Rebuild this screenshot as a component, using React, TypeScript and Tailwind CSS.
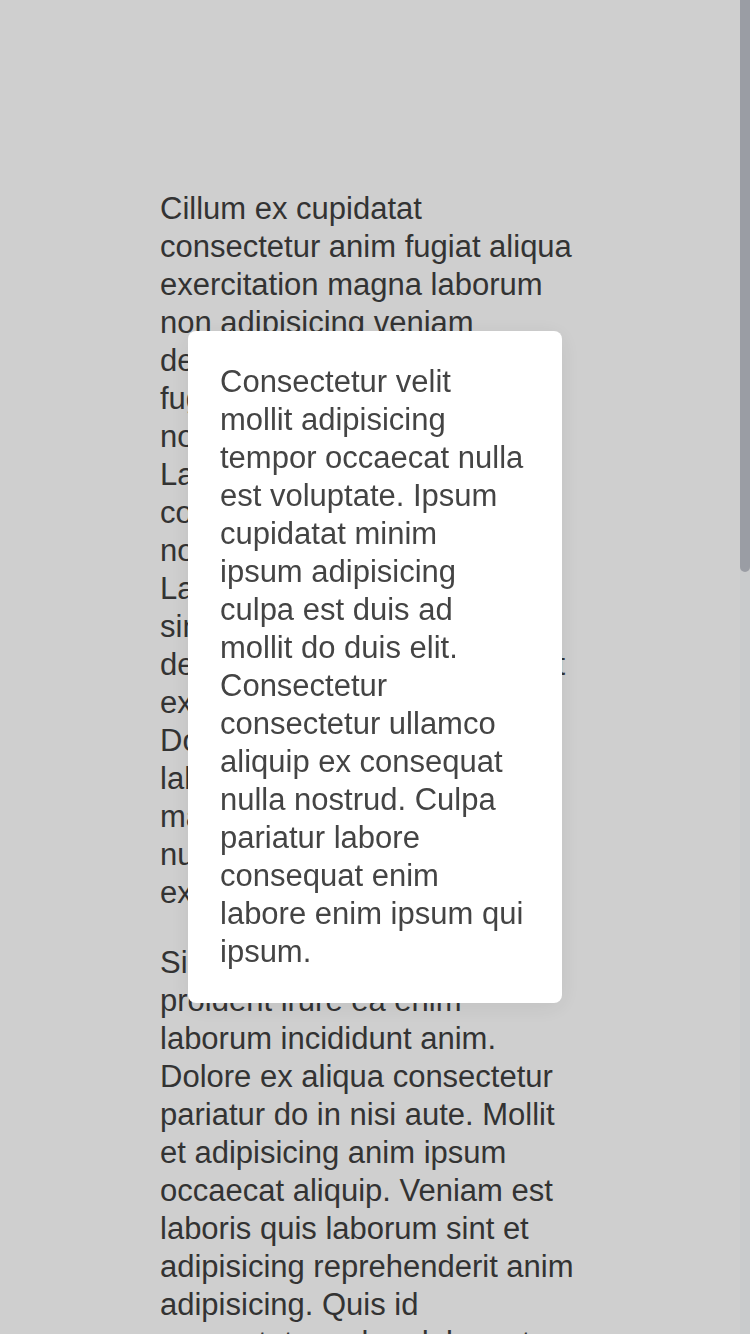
import { useState } from "react";

const PARAGRAPHS = [
  "Cillum ex cupidatat consectetur anim fugiat aliqua exercitation magna laborum non adipisicing veniam deserunt eiusmod laboris fugiat cillum aliquip officia nostrud consequat dolor. Laboris ipsum aliqua elit consectetur velit magna est non eiusmod pariatur sunt. Labore tempor excepteur elit sint mollit ullamco irure deserunt consequat aliquip ut ex nulla enim tempor laboris. Dolore aute anim cillum laborum ea voluptate irure magna commodo ad ipsum nulla dolor occaecat pariatur ex fugiat.",
  "Sint consequat sunt anim proident irure ea enim laborum incididunt anim. Dolore ex aliqua consectetur pariatur do in nisi aute. Mollit et adipisicing anim ipsum occaecat aliquip. Veniam est laboris quis laborum sint et adipisicing reprehenderit anim adipisicing. Quis id consectetur culpa dolor est.",
  "Aute irure velit anim pariatur eiusmod culpa magna. Esse nisi officia non labore dolore id velit sunt qui. Occaecat elit tempor ea consequat ipsum voluptate laboris deserunt nostrud.",
];

const MODAL_TEXT =
  "Consectetur velit mollit adipisicing tempor occaecat nulla est voluptate. Ipsum cupidatat minim ipsum adipisicing culpa est duis ad mollit do duis elit. Consectetur consectetur ullamco aliquip ex consequat nulla nostrud. Culpa pariatur labore consequat enim labore enim ipsum qui ipsum.";

export default function App() {
  const [open] = useState(true);

  return (
    <div className="relative flex h-screen w-full overflow-hidden bg-white font-['Liberation_Sans',Arial,sans-serif] text-[31px] leading-[38px] text-[#3f3f3f]">
      {/* page content */}
      <main className="min-w-0 flex-1">
        <div className="mx-auto flex w-[420px] flex-col gap-8 pt-[190px]">
          {PARAGRAPHS.map((p, i) => (
            <p key={i}>{p}</p>
          ))}
        </div>
      </main>

      {/* scrollbar */}
      <div className="w-[10px] shrink-0 bg-[#f8fafc]">
        <div className="h-[572px] rounded-b-full rounded-t-[3px] bg-[#bec2ca]" />
      </div>

      {/* backdrop + dialog */}
      {open && (
        <div className="fixed inset-0 flex items-center justify-center bg-[rgba(0,0,0,0.19)]">
          <div className="w-[374px] rounded-lg bg-white py-8 pl-[32px] pr-[35px] text-[#444] shadow-[0_4px_24px_rgba(0,0,0,0.08)]">
            <p>{MODAL_TEXT}</p>
          </div>
        </div>
      )}
    </div>
  );
}
